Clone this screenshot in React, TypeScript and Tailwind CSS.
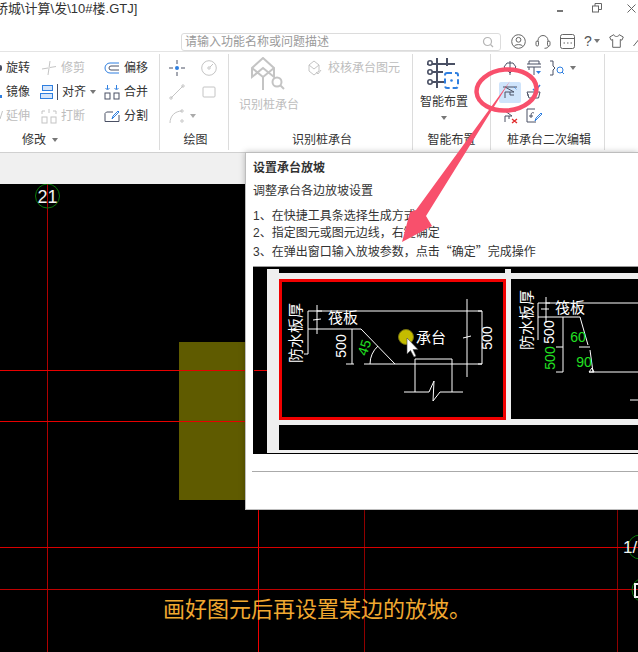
import React from 'react';

const BLUE = '#2f7fe0';
const DARK = '#4a5064';
const GRAY = '#c4c4c4';

type IconProps = { children: React.ReactNode; size?: number };

const Ico: React.FC<IconProps> = ({ children, size = 16 }) => (
    <svg width={size} height={size} viewBox="0 0 16 16" fill="none" strokeWidth="1" className="shrink-0">
        {children}
    </svg>
);

const Caret: React.FC<{ className?: string }> = ({ className = '' }) => (
    <span className={`inline-block w-0 h-0 border-x-[3px] border-x-transparent border-t-[4px] border-t-[#777] ${className}`} />
);

const Tool: React.FC<{ icon: React.ReactNode; label: string; off?: boolean; caret?: boolean }> = ({ icon, label, off, caret }) => (
    <div className={`flex items-center gap-[4px] h-[24px] ${off ? 'text-[#bdbdbd]' : 'text-[#333]'}`}>
        {icon}
        <span className="whitespace-nowrap">{label}</span>
        {caret && <Caret />}
    </div>
);

const GroupLabel: React.FC<{ children: React.ReactNode; className?: string }> = ({ children, className = '' }) => (
    <div className={`h-[20px] leading-[20px] text-[#333] text-center whitespace-nowrap ${className}`}>{children}</div>
);

const TitleBar = () => (
    <div className="h-[30px] shrink-0 flex items-start bg-white relative">
        <div className="text-[13px] text-[#333] leading-[16px] pt-[1px] -ml-[5px] whitespace-nowrap">桥城\计算\发\10#楼.GTJ]</div>
        <div className="ml-auto flex items-center pt-[3px]">
            <span className="w-[6px] h-[2px] bg-[#777] mr-[29px] mt-[6px]" />
            <svg width="10" height="10" viewBox="0 0 10 10" fill="none" stroke="#666" className="mr-[25px]">
                <rect x="0.5" y="3" width="6" height="6" />
                <path d="M3 3V.5h6.5v6H7" />
            </svg>
            <svg width="9" height="9" viewBox="0 0 9 9" stroke="#666" className="mr-[2px]">
                <path d="M.5.5l8 8M8.5.5l-8 8" />
            </svg>
        </div>
    </div>
);

const SearchRow = () => (
    <div className="h-[22px] shrink-0 flex items-start bg-white border-b border-[#e4e4e4] relative">
        <div className="ml-[181px] mt-[3px] w-[320px] h-[18px] border border-[#dcdcdc] rounded-[3px] flex items-center pl-[3px] pr-[6px] text-[#9a9a9a] bg-white">
            <span className="whitespace-nowrap">请输入功能名称或问题描述</span>
            <svg width="12" height="12" viewBox="0 0 12 12" fill="none" stroke="#b5b5b5" strokeWidth="1.2" className="ml-auto">
                <circle cx="5.5" cy="5.5" r="4" />
                <path d="M8.5 8.5l2.5 2.5" />
            </svg>
        </div>
        <div className="absolute left-[511px] top-[2px] flex items-center h-[18px] gap-[9px]">
            <svg width="15" height="15" viewBox="0 0 15 15" fill="none" stroke="#666">
                <circle cx="7.5" cy="7.5" r="6.8" />
                <circle cx="7.5" cy="5.8" r="2.4" />
                <path d="M3.2 12.4c1-2.4 7.6-2.4 8.6 0" />
            </svg>
            <svg width="16" height="15" viewBox="0 0 16 15" fill="none" stroke="#666">
                <path d="M3 8V6.5a5 5 0 0 1 10 0V8" />
                <rect x="1" y="7" width="2.5" height="5" rx="1.2" />
                <rect x="12.5" y="7" width="2.5" height="5" rx="1.2" />
                <path d="M13.5 12c0 1.6-2 2.3-4 2.3" />
            </svg>
            <svg width="15" height="15" viewBox="0 0 15 15" fill="none" stroke="#666">
                <rect x="0.5" y="0.5" width="14" height="14" rx="2" />
                <path d="M.5 4.5h14" />
                <path d="M3.5 9h1.5M7 9h1.5M10.5 9H12" />
            </svg>
            <span className="text-[14px] text-[#555] w-[8px]">?</span>
            <Caret className="-ml-[7px] border-x-[2px] border-t-[3px]" />
            <svg width="15" height="14" viewBox="0 0 15 14" fill="none" stroke="#666">
                <path d="M4.8.7L.7 3l1.4 3.2 1.6-.7v7.800h7.600V5.500l1.600.7L14.300 3 10.200.7c-.6 2.400-4.800 2.400-5.400 0z" />
            </svg>
            <svg width="7" height="12" viewBox="0 0 7 12" stroke="#666">
                <path d="M.5 11L7 3" />
            </svg>
        </div>
    </div>
);

const ModifyGroup = () => (
    <div className="w-[160px] shrink-0 border-r border-[#dcdcdc] flex flex-col">
        <div className="grid grid-cols-[41px_63px_56px] flex-1 pt-[2px] content-start">
            <Tool label="旋转" icon={<span className="w-[2px] h-[6px] bg-[#4a5064] rounded-r-full" />} />
            <Tool off label="修剪" icon={
                <Ico><path d="M1 9l6-1M9 7.500l6-1M9 1L7 15" stroke={GRAY} /></Ico>
            } />
            <Tool label="偏移" icon={
                <Ico><path d="M15 3H6a5 5 0 0 0 0 10h9" stroke={BLUE} /><path d="M15 6H7a2 2 0 0 0 0 4h8" stroke={DARK} /></Ico>
            } />
            <Tool label="镜像" icon={<span className="w-[2px] h-[3px] bg-[#2f7fe0] mt-[8px]" />} />
            <Tool label="对齐" caret icon={
                <svg width="19" height="16" viewBox="0 0 19 16" fill="none" className="shrink-0 -ml-[1px] -mr-[1px]">
                    <rect x="2.500" y="1.500" width="10" height="5" fill="#d6e6fb" stroke={BLUE} />
                    <rect x="0.500" y="9.500" width="12" height="5" fill="#d6e6fb" stroke={BLUE} />
                    <path d="M17.500 0v16" stroke={DARK} />
                </svg>
            } />
            <Tool label="合并" icon={
                <Ico>
                    <rect x="1" y="9" width="5" height="6" stroke={DARK} />
                    <rect x="10" y="9" width="5" height="6" stroke={DARK} />
                    <path d="M3.500 1v4M1.500 4l2 2 2-2M12.500 1v4M10.500 4l2 2 2-2" stroke={BLUE} />
                </Ico>
            } />
            <Tool off label="延伸" icon={
                <svg width="6" height="10" viewBox="0 0 6 10" className="shrink-0 -mr-[4px]"><path d="M2.500 0L0 8" stroke={GRAY} /></svg>
            } />
            <Tool off label="打断" icon={
                <Ico>
                    <rect x="1" y="9" width="5" height="6" stroke={GRAY} />
                    <rect x="10" y="9" width="5" height="6" stroke={GRAY} />
                    <path d="M1 6V3h3M15 6V3h-3M8 1v4" stroke={GRAY} />
                </Ico>
            } />
            <Tool label="分割" icon={
                <Ico>
                    <path d="M9 4H2.500L1 5.500v8h14V7" stroke={DARK} />
                    <path d="M8 11l1-3 5-5 1 1-5 5z" stroke={BLUE} />
                </Ico>
            } />
        </div>
        <GroupLabel className="pl-[22px] flex items-center gap-[6px]">修改<Caret /></GroupLabel>
    </div>
);

const DrawGroup = () => (
    <div className="w-[69px] shrink-0 border-r border-[#dcdcdc] flex flex-col">
        <div className="grid grid-cols-[32px_24px] pl-[9px] pt-[2px] flex-1 content-start">
            <div className="h-[24px] flex items-center">
                <Ico>
                    <path d="M0 8h4M12 8h4M8 0v4M8 12v4" stroke={DARK} />
                    <circle cx="8" cy="8" r="2" fill={BLUE} />
                </Ico>
            </div>
            <div className="h-[24px] flex items-center">
                <Ico>
                    <circle cx="8" cy="8" r="7.300" stroke={GRAY} />
                    <circle cx="8" cy="8" r="1.200" stroke={GRAY} />
                    <path d="M9 7l3-3" stroke={GRAY} />
                </Ico>
            </div>
            <div className="h-[24px] flex items-center">
                <Ico><path d="M2 14L14 2" stroke={GRAY} /><circle cx="2" cy="14" r="1.200" stroke={GRAY} /><circle cx="14" cy="2" r="1.200" stroke={GRAY} /></Ico>
            </div>
            <div className="h-[24px] flex items-center">
                <Ico><rect x="2" y="3" width="12" height="10" rx="1" stroke={GRAY} /></Ico>
            </div>
            <div className="h-[24px] flex items-center gap-[5px] col-span-2">
                <Ico><path d="M1 15C1 8 6 3 13 3" stroke={GRAY} /><circle cx="13" cy="3" r="1.200" stroke={GRAY} /><circle cx="13" cy="13" r="1.200" stroke={GRAY} /></Ico>
                <Caret className="border-t-[#aaa]" />
            </div>
        </div>
        <GroupLabel className="pl-[3px]">绘图</GroupLabel>
    </div>
);

const PileIdentifyGroup = () => (
    <div className="w-[184px] shrink-0 border-r border-[#dcdcdc] flex flex-col">
        <div className="flex flex-1 pt-[2px]">
            <div className="w-[79px] pl-[10px] flex flex-col text-[#bdbdbd]">
                <svg width="36" height="34" viewBox="0 0 36 34" fill="none" stroke={GRAY} strokeWidth="2" className="ml-[11px] mt-[1px]">
                    <path d="M13 1L2 11v9l11-9 11 9v-9zM2 11l11 9 11-9M13 20v13" />
                    <circle cx="27" cy="25" r="4.500" />
                    <path d="M30 28l4 4" />
                </svg>
                <div className="whitespace-nowrap mt-[5px]">识别桩承台</div>
            </div>
            <Tool off label="校核承台图元" icon={
                <Ico>
                    <path d="M6 1L1 5v6l5 4 5-4V5zM1 5l5 4 5-4" stroke={GRAY} />
                    <path d="M8 12l2 2 3-4" stroke={GRAY} />
                </Ico>
            } />
        </div>
        <GroupLabel className="pl-[3px]">识别桩承台</GroupLabel>
    </div>
);

const SmartGroup = () => (
    <div className="w-[78px] shrink-0 border-r border-[#dcdcdc] flex flex-col">
        <div className="flex-1 flex flex-col items-start pl-[7px] pt-[4px] text-[#333]">
            <svg width="32" height="32" viewBox="0 0 32 32" fill="none" className="ml-[7px]">
                <path d="M10 0v30M20 0v8M0 6h28M4 14h12M4 24h16" stroke={DARK} strokeWidth="2" />
                <circle cx="3" cy="5" r="2.200" fill="#fff" stroke={DARK} strokeWidth="1.600" />
                <circle cx="3" cy="14" r="2.200" fill="#fff" stroke={DARK} strokeWidth="1.600" />
                <circle cx="3" cy="24" r="2.200" fill="#fff" stroke={DARK} strokeWidth="1.600" />
                <rect x="18" y="15" width="13" height="15" rx="2" fill="#fff" stroke={BLUE} strokeWidth="2" strokeDasharray="5 3" />
                <circle cx="24.500" cy="22.500" r="1.300" fill={BLUE} />
            </svg>
            <div className="mt-[3px]">智能布置</div>
            <Caret className="mt-[5px] ml-[21px]" />
        </div>
        <GroupLabel>智能布置</GroupLabel>
    </div>
);

const SecondEditGroup = () => (
    <div className="w-[114px] shrink-0 border-r border-[#dcdcdc] flex flex-col">
        <div className="grid grid-cols-[25px_24px_36px] pl-[6px] pt-[2px] flex-1 content-start">
            <div className="h-[24px] flex items-center justify-center">
                <Ico><path d="M8 1v14M5 3L2 7l3 3M11 3l3 4-3 3M5 3h6M5 10l3 3 3-3" stroke={DARK} /></Ico>
            </div>
            <div className="h-[24px] flex items-center justify-center">
                <Ico><path d="M1 4h14M3 4V1h10v3M1 7h14M3 7v3M8 7v8" stroke={DARK} /><path d="M10 11h5l-2.500 3z" fill={BLUE} /></Ico>
            </div>
            <div className="h-[24px] flex items-center gap-[5px] pl-[3px]">
                <Ico><path d="M1 1h3v5l2 2-2 2v5H1" stroke={DARK} /><circle cx="11" cy="10" r="3" stroke={BLUE} /><path d="M13 12l2 2" stroke={BLUE} /></Ico>
                <Caret />
            </div>
            <div className="h-[24px] flex items-center justify-center">
                <div className="w-[22px] h-[21px] rounded-[2px] bg-[#cfe4fb] flex items-center justify-center">
                    <Ico><path d="M1 3h14M3 3l9 5H3v6M8 8v3h4" stroke={DARK} /><path d="M12 3l3 3" stroke={BLUE} strokeDasharray="1 1" /></Ico>
                </div>
            </div>
            <div className="h-[24px] flex items-center justify-center">
                <Ico><path d="M1 8h13l-1.500 6H3zM1 11h2" stroke={DARK} /><path d="M7 5l2 2 5-6" stroke={BLUE} strokeWidth="1.500" /></Ico>
            </div>
            <div />
            <div className="h-[24px] flex items-center justify-center">
                <Ico><path d="M1 3h13M3 3l7 5H3v6M7 8v3" stroke={DARK} /><path d="M10 11l5 4M15 11l-5 4" stroke="#e02a2a" strokeWidth="1.300" /></Ico>
            </div>
            <div className="h-[24px] flex items-center justify-center">
                <Ico><path d="M9 1H1v13h9" stroke={DARK} /><path d="M8 5c-2-1-3 0-3 3v2M3 8h4" stroke={DARK} /><path d="M9 13l1-3 5-5 1 1-5 5z" stroke={BLUE} /></Ico>
            </div>
        </div>
        <GroupLabel className="pl-[3px]">桩承台二次编辑</GroupLabel>
    </div>
);

const Ribbon = () => (
    <div className="h-[101px] shrink-0 bg-white border-b border-[#d0d0d0] flex pt-[2px] pb-[2px]">
        <ModifyGroup />
        <DrawGroup />
        <PileIdentifyGroup />
        <SmartGroup />
        <SecondEditGroup />
    </div>
);

const CadCanvas = () => (
    <svg viewBox="0 184 638 468" className="absolute inset-0 w-full h-full">
        <rect x="179" y="342" width="70" height="158" fill="#5f5b00" />
        <rect x="47" y="184" width="1" height="468" fill="#b00000" />
        <rect x="258" y="500" width="1" height="152" fill="#f00000" />
        <rect x="364" y="500" width="1" height="152" fill="#900000" />
        <rect x="617" y="500" width="1" height="152" fill="#900000" />
        <rect x="0" y="370" width="250" height="1" fill="#e80000" />
        <rect x="0" y="421" width="250" height="1" fill="#e80000" />
        <rect x="0" y="547" width="638" height="1" fill="#d80000" />
        <rect x="0" y="589" width="638" height="1" fill="#c00000" />
        <g fill="none" stroke="#0a7a0a">
            <circle cx="47.500" cy="196" r="12" />
            <circle cx="640" cy="547" r="12" />
            <circle cx="644" cy="590" r="12" />
        </g>
        <text x="47.500" y="203" textAnchor="middle" fontSize="18" fill="#f2f2f2">21</text>
        <text x="623" y="553" fontSize="17" fill="#f2f2f2">1/</text>
        <rect x="635" y="584" width="6" height="13" fill="none" stroke="#f2f2f2" strokeWidth="2" />
    </svg>
);

const SlopeDiagram = () => (
    <svg viewBox="253 267 385 187" className="w-full h-[187px] block">
        <rect x="253" y="267" width="385" height="187" fill="#000" />
        <rect x="254" y="370" width="13" height="1" fill="#e80000" />
        <rect x="267" y="269" width="12" height="184" fill="#efefef" />
        <rect x="279" y="273" width="359" height="6" fill="#efefef" />
        <rect x="505" y="269" width="6" height="156" fill="#efefef" />
        <rect x="279" y="419" width="359" height="6" fill="#efefef" />
        <rect x="279" y="450" width="359" height="3" fill="#efefef" />
        <rect x="280.500" y="280.500" width="224" height="138" fill="#000" stroke="#f00000" strokeWidth="3" />

        <g fill="none" stroke="#fff" strokeWidth="1">
            <path d="M317 311H467M317 305V334M308 311H322M308 311V354M304 354H308M308 329H361L395 364M352 329V364M346 364H354M364 364H467" />
            <path d="M467 299V377M463 338l8-2M313 320l8-1" />
            <path d="M467 311H482V364H467M478 311h4M478 364h4" />
            <path d="M415 392V359H452V392M404 392H429L434 381 433 401 440 392H463" />
            <path d="M370 364A25 25 0 0 1 378 346" />

            <path d="M546 303H638M546 297V323M538 303H550M538 303V340M538 317H580L588 345M590 350L593 372M563 317V372M556 347H563M556 372H563M579 347H590M589 372H638M630 400H638" />
            <path d="M589 372l3-4 2 4zM541 309h8" />
        </g>

        <g fill="#fff" fontSize="15" textAnchor="middle">
            <text transform="translate(301 333) rotate(-90)">防水板厚</text>
            <text x="343" y="323">筏板</text>
            <text x="431" y="343">承台</text>
            <text transform="translate(346 346) rotate(-90)" fontSize="14">500</text>
            <text transform="translate(492 338) rotate(-90)" fontSize="14">500</text>
            <text transform="translate(532 320) rotate(-90)">防水板厚</text>
            <text x="570" y="313">筏板</text>
            <text transform="translate(554 332) rotate(-90)" fontSize="14">500</text>
        </g>
        <g fill="#22e022" fontSize="14" textAnchor="middle">
            <text transform="translate(369 349) rotate(-72)">45</text>
            <text transform="translate(555 358) rotate(-90)">500</text>
            <text x="578" y="342">60</text>
            <text x="584" y="367">90</text>
        </g>

        <circle cx="406" cy="337" r="7.500" fill="#c4bc00" stroke="#77720f" strokeWidth="1" />
        <path d="M407 338V354L410.500 350.500 414 357 416 356 413 349.500H418z" fill="#fff" stroke="#444" strokeWidth="0.600" />
    </svg>
);

const HelpPopup = () => (
    <div className="absolute left-[245px] top-[152px] w-[393px] h-[358px] bg-white border-l border-t border-b border-[#bdbdbd] shadow-[0_0_6px_rgba(0,0,0,0.25)] flex flex-col text-[#333]">
        <div className="pl-[7px] pt-[7px]">
            <div className="font-bold leading-[17px]">设置承台放坡</div>
            <div className="leading-[17px] mt-[6px]">调整承台各边放坡设置</div>
            <div className="mt-[8px] leading-[17px]">
                <div className="h-[17px]">1、在快捷工具条选择生成方式</div>
                <div className="h-[17px]">2、指定图元或图元边线，右键确定</div>
                <div className="h-[17px]">
                    3、在弹出窗口输入放坡参数，点击
                    <span className="font-['Noto_Sans_CJK_SC',sans-serif]">“</span>确定<span className="font-['Noto_Sans_CJK_SC',sans-serif]">”</span>
                    完成操作
                </div>
            </div>
        </div>
        <div className="ml-[7px] mt-[7px] border-t border-[#999]">
            <SlopeDiagram />
        </div>
        <div className="ml-[6px] mt-[17px] border-t border-[#aaa]" />
    </div>
);

const Annotation = () => (
    <svg viewBox="0 0 638 652" className="absolute inset-0 w-full h-full pointer-events-none">
        <ellipse cx="506.500" cy="90" rx="30" ry="20.500" fill="none" stroke="#f8506c" strokeWidth="4.500" transform="rotate(-5 506.500 90)" />
        <path d="M510 81L426 216 432 226 402 242 410 212 416 210z" fill="#f8506c" />
    </svg>
);

const App: React.FC = () => {
    return (
        <div lang="zh-CN" className="relative w-[638px] h-[652px] overflow-hidden flex flex-col bg-black text-[12px] font-['Liberation_Sans','Noto_Sans_CJK_SC',sans-serif]">
            <TitleBar />
            <SearchRow />
            <Ribbon />
            <div className="h-[31px] shrink-0 bg-[#f0f0f0]" />
            <div className="relative flex-1 bg-black">
                <CadCanvas />
            </div>
            <div className="absolute left-[163px] top-[595px] text-[22px] leading-[30px] text-[#f0a830] whitespace-nowrap">
                画好图元后再设置某边的放坡。
            </div>
            <HelpPopup />
            <Annotation />
        </div>
    );
};

export default App;
